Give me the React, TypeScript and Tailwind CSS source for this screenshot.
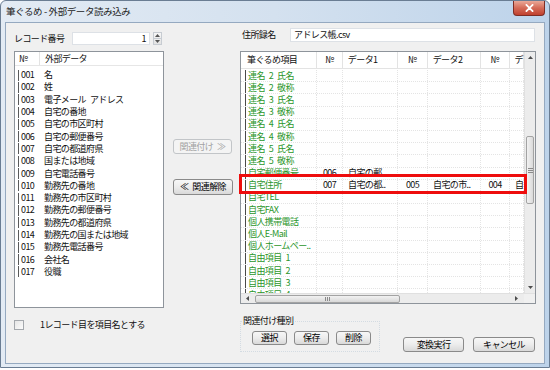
import React from 'react';

// left list: external data fields
const LEFT_ITEMS = [
  ['001', '名'],
  ['002', '姓'],
  ['003', '電子メール\u2002アドレス'],
  ['004', '自宅の番地'],
  ['005', '自宅の市区町村'],
  ['006', '自宅の郵便番号'],
  ['007', '自宅の都道府県'],
  ['008', '国または地域'],
  ['009', '自宅電話番号'],
  ['010', '勤務先の番地'],
  ['011', '勤務先の市区町村'],
  ['012', '勤務先の郵便番号'],
  ['013', '勤務先の都道府県'],
  ['014', '勤務先の国または地域'],
  ['015', '勤務先電話番号'],
  ['016', '会社名'],
  ['017', '役職'],
];

const S = '\u2002';

// right grid rows (first column is the fudegurume item)
const GRID_ROWS: { name: string; cells?: string[] }[] = [
  { name: `連名${S}2${S}氏名` },
  { name: `連名${S}2${S}敬称` },
  { name: `連名${S}3${S}氏名` },
  { name: `連名${S}3${S}敬称` },
  { name: `連名${S}4${S}氏名` },
  { name: `連名${S}4${S}敬称` },
  { name: `連名${S}5${S}氏名` },
  { name: `連名${S}5${S}敬称` },
  { name: '自宅郵便番号', cells: ['006', '自宅の郵..', '', '', '', ''] },
  { name: '自宅住所', cells: ['007', '自宅の都..', '005', '自宅の市..', '004', '自'] },
  { name: '自宅TEL' },
  { name: '自宅FAX' },
  { name: '個人携帯電話' },
  { name: '個人E-Mail' },
  { name: '個人ホームペー..' },
  { name: `自由項目${S}1` },
  { name: `自由項目${S}2` },
  { name: `自由項目${S}3` },
  { name: `自由項目${S}4` },
];

const HEADERS = ['№', 'データ1', '№', 'データ2', '№', 'デ'];
const COL_W = ['w-[26px]', 'w-[55px]', 'w-[30px]', 'w-[53px]', 'w-[29px]', 'flex-1'];
const NUM_COL = [true, false, true, false, true, false];

function Btn({ children, disabled, className = '' }: { children: React.ReactNode; disabled?: boolean; className?: string }) {
  return (
    <div
      className={`flex items-center justify-center rounded-[3px] border ${
        disabled
          ? 'border-[#c2c5c8] bg-[#f4f4f4] text-[#a3a3a3]'
          : 'border-[#8a8a8a] bg-gradient-to-b from-[#f7f7f7] via-[#ececec] to-[#d9d9d9] text-black'
      } ${className}`}
    >
      {children}
    </div>
  );
}

function Arrow({ dir }: { dir: 'up' | 'down' | 'left' | 'right' }) {
  const pts = {
    up: '1,4 3.5,1 6,4',
    down: '1,1 3.5,4 6,1',
    left: '4,1 1,3.5 4,6',
    right: '1,1 4,3.5 1,6',
  }[dir];
  const vb = dir === 'up' || dir === 'down' ? '0 0 7 5' : '0 0 5 7';
  const size = dir === 'up' || dir === 'down' ? 'w-[7px] h-[5px]' : 'w-[5px] h-[7px]';
  return (
    <svg viewBox={vb} className={size}>
      <polygon points={pts} fill="#4d4d4d" />
    </svg>
  );
}

export default function App() {
  return (
    <div className="w-[550px] h-[370px] overflow-hidden bg-white [font-family:'Noto_Sans_CJK_JP','Noto_Sans',sans-serif]">
      <div className="w-[550px] h-[368px] flex flex-col rounded-t-[6px] border border-[#6a7d93] bg-gradient-to-r from-[#e3ebf4] via-[#d4e1ef] to-[#bdd3ea]">
        {/* title bar */}
        <div className="h-[21px] flex items-start shrink-0">
          <div className="pl-[5px] pt-[3px] text-[9.5px] tracking-[-0.4px] text-[#1b1b1b] flex-1 leading-[14px]">
            筆ぐるめ - 外部データ読み込み
          </div>
          <div className="mr-[4px] w-[32px] h-[15px] rounded-b-[4px] border border-t-0 border-[#7e2d24] bg-gradient-to-b from-[#e9a898] via-[#d46a57] to-[#c0402e] flex items-center justify-center">
            <svg viewBox="0 0 10 9" className="w-[9px] h-[8px]">
              <path d="M1.5 1 L8.5 8 M8.5 1 L1.5 8" stroke="#ffffff" strokeWidth="2" strokeLinecap="round" />
            </svg>
          </div>
        </div>

        {/* client area */}
        <div className="mx-[4px] h-[342px] border border-[#95a9c0] bg-[#f0f0f0] flex text-[9px] tracking-[-0.6px] text-[#111] leading-[12px]">
          {/* left column */}
          <div className="w-[158px] pl-[8px] flex flex-col">
            <div className="mt-[9px] h-[13px] flex items-center">
              <span className="w-[58px]">レコード番号</span>
              <div className="w-[78px] h-[13px] bg-white border border-[#dde1e6] flex items-center justify-end pr-[3px]">1</div>
              <div className="ml-[3px] w-[9px] h-[13px] border border-[#c7ccd2] bg-gradient-to-b from-[#f6f6f6] to-[#e3e3e3] flex flex-col">
                <div className="flex-1 flex items-center justify-center border-b border-[#c7ccd2]">
                  <svg viewBox="0 0 5 3" className="w-[5px] h-[3px]"><polygon points="0,3 2.5,0 5,3" fill="#555" /></svg>
                </div>
                <div className="flex-1 flex items-center justify-center">
                  <svg viewBox="0 0 5 3" className="w-[5px] h-[3px]"><polygon points="0,0 2.5,3 5,0" fill="#555" /></svg>
                </div>
              </div>
            </div>

            {/* external data list */}
            <div className="mt-[6px] w-[150px] h-[257px] bg-white border border-[#8e949b] flex flex-col">
              <div className="h-[14px] flex items-center border-b border-[#e6e6e6] shrink-0">
                <div className="w-[25px] pl-[4px] h-full flex items-center border-r border-[#e3e3e3]">№</div>
                <div className="pl-[5px]">外部データ</div>
              </div>
              <div className="pt-[3px] flex flex-col">
                {LEFT_ITEMS.map(([no, name]) => (
                  <div key={no} className="h-[12.3px] flex items-center">
                    <div className="ml-[3px] h-[11px] border-l border-[#5a5a5a]" />
                    <span className="pl-[2px] w-[25px]">{no}</span>
                    <span>{name}</span>
                  </div>
                ))}
              </div>
            </div>

            <div className="mt-[12px] h-[10px] flex items-center">
              <div className="w-[10px] h-[10px] border border-[#a4a8ad] bg-gradient-to-br from-[#e6e6e6] to-[#fbfbfb]" />
              <span className="ml-[16px]">1レコード目を項目名とする</span>
            </div>
          </div>

          {/* middle buttons */}
          <div className="w-[76px] pl-[9px] flex flex-col">
            <Btn disabled className="mt-[116px] w-[59px] h-[15px]">関連付け{S}≫</Btn>
            <Btn className="mt-[25px] w-[60px] h-[16px]">≪{S}関連解除</Btn>
          </div>

          {/* right column */}
          <div className="w-[296px] flex flex-col">
            <div className="mt-[5px] h-[14px] flex items-center">
              <span className="pl-[2px] w-[50px]">住所録名</span>
              <div className="w-[245px] h-[14px] bg-white border border-[#dde1e6] flex items-center pl-[3px]">アドレス帳.csv</div>
            </div>

            {/* mapping grid */}
            <div className="relative mt-[9px] w-[296px] h-[253px] bg-white border border-[#8e949b] flex flex-col">
              <div className="flex h-[241px]">
                <div className="w-[283px] overflow-hidden flex flex-col">
                  <div className="h-[17px] flex border-b border-[#e3e3e3] shrink-0">
                    <div className="w-[76px] pl-[6px] flex items-center border-r border-[#e3e3e3]">筆ぐるめ項目</div>
                    {HEADERS.map((h, i) => (
                      <div
                        key={i}
                        className={`${COL_W[i]} flex items-center border-r border-[#e3e3e3] ${NUM_COL[i] ? 'justify-center' : 'pl-[5px]'}`}
                      >
                        {h}
                      </div>
                    ))}
                  </div>
                  <div className="pt-[1px] flex flex-col">
                    {GRID_ROWS.map((r) => (
                      <div key={r.name} className="h-[12.2px] flex shrink-0 border-b border-dotted border-[#e4e4e4]">
                        <div className="w-[76px] flex items-center border-r border-dotted border-[#e4e4e4] whitespace-nowrap overflow-hidden">
                          <div className="ml-[4px] h-[12px] border-l border-[#4a4a4a]" />
                          <span className="pl-[2px] text-[#2b962b]">{r.name}</span>
                        </div>
                        {COL_W.map((w, i) => (
                          <div
                            key={i}
                            className={`${w} flex items-center border-r border-dotted border-[#e4e4e4] whitespace-nowrap overflow-hidden ${NUM_COL[i] ? 'justify-center' : 'pl-[5px]'}`}
                          >
                            {r.cells ? r.cells[i] : ''}
                          </div>
                        ))}
                      </div>
                    ))}
                  </div>
                </div>
                {/* vertical scrollbar */}
                <div className="w-[11px] bg-[#ececec] border-l border-[#e0e0e0] flex flex-col">
                  <div className="h-[11px] flex items-center justify-center"><Arrow dir="up" /></div>
                  <div className="mt-[73px] mx-[1px] h-[68px] rounded-[2px] border border-[#a3a3a3] bg-gradient-to-r from-[#f2f2f2] to-[#dadada] flex flex-col items-center justify-center gap-[1px]">
                    <div className="w-[5px] border-t border-[#8a8a8a]" />
                    <div className="w-[5px] border-t border-[#8a8a8a]" />
                    <div className="w-[5px] border-t border-[#8a8a8a]" />
                  </div>
                  <div className="flex-1" />
                  <div className="h-[11px] flex items-center justify-center"><Arrow dir="down" /></div>
                </div>
              </div>
              {/* horizontal scrollbar */}
              <div className="h-[10px] flex bg-[#ececec] border-t border-[#e0e0e0]">
                <div className="w-[283px] flex items-center">
                  <div className="w-[12px] flex justify-center"><Arrow dir="left" /></div>
                  <div className="ml-[2px] w-[145px] h-[8px] rounded-[2px] border border-[#a3a3a3] bg-gradient-to-b from-[#f2f2f2] to-[#d8d8d8] flex items-center justify-center gap-[1px]">
                    <div className="h-[4px] border-l border-[#8a8a8a]" />
                    <div className="h-[4px] border-l border-[#8a8a8a]" />
                    <div className="h-[4px] border-l border-[#8a8a8a]" />
                  </div>
                  <div className="flex-1" />
                  <div className="w-[12px] flex justify-center mr-[2px]"><Arrow dir="right" /></div>
                </div>
                <div className="w-[11px] bg-[#f0f0f0]" />
              </div>

              {/* red highlight around the 自宅住所 row */}
              <div className="absolute left-[-2px] top-[122px] w-[288px] h-[20px] border-[3px] border-[#ee0d0d]" />
            </div>

            {/* bottom area */}
            <div className="mt-[12px] flex items-start">
              <fieldset className="w-[140px] h-[36px] border border-dotted border-[#d3dbe2] pl-[11px] pr-0 pb-0 pt-0 m-0">
                <legend className="px-[1px] ml-[-10px] leading-[10px]">関連付け種別</legend>
                <div className="mt-[5px] flex gap-[7px]">
                  <Btn className="w-[35px] h-[14px]">選択</Btn>
                  <Btn className="w-[35px] h-[14px]">保存</Btn>
                  <Btn className="w-[35px] h-[14px]">削除</Btn>
                </div>
              </fieldset>
              <div className="ml-[23px] mt-[21px] flex gap-[9px]">
                <Btn className="w-[61px] h-[15px]">変換実行</Btn>
                <Btn className="w-[62px] h-[15px]">キャンセル</Btn>
              </div>
            </div>
          </div>
        </div>
      </div>
    </div>
  );
}
